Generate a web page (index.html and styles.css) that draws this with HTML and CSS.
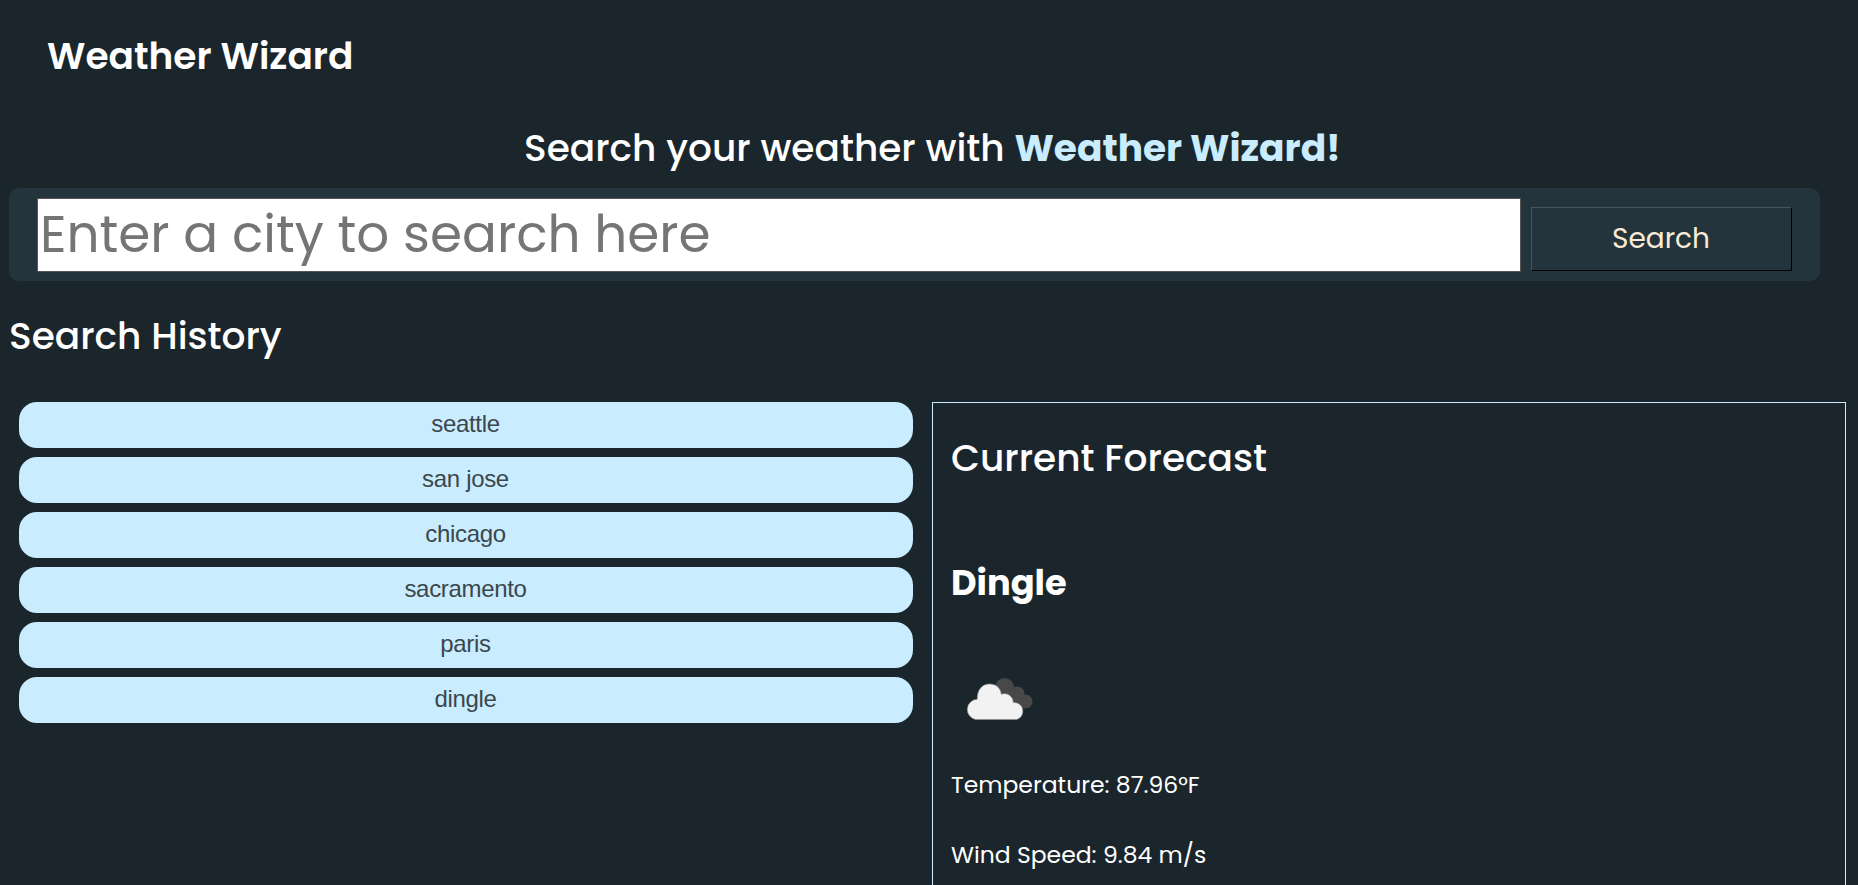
FILE: index.html
```html
<!DOCTYPE html>
<html lang="en"><head><meta charset="utf-8"><title>Weather Wizard</title><link rel="stylesheet" href="styles.css"></head>
<body>
<header class="site-header"><h1 class="brand">Weather Wizard</h1></header>
<main>
<h2 class="tagline">Search your weather with <strong class="tagline-name">Weather Wizard!</strong></h2>
<form class="search">
<input class="search-input" type="text" placeholder="Enter a city to search here">
<button class="search-button" type="button">Search</button>
</form>
<h2 class="history-title">Search History</h2>
<div class="columns">
<div class="history">
<button class="city">seattle</button>
<button class="city">san jose</button>
<button class="city">chicago</button>
<button class="city">sacramento</button>
<button class="city">paris</button>
<button class="city">dingle</button>
</div>
<section class="forecast">
<h2 class="forecast-title">Current Forecast</h2>
<h3 class="forecast-city">Dingle</h3>
<svg class="forecast-icon" viewBox="0 0 90 60" width="90" height="60"><g fill="#484849"><circle cx="49.500" cy="17.500" r="9.500"/><circle cx="62.500" cy="23.500" r="7"/><circle cx="70.500" cy="31.500" r="7"/><path d="M48 22L62 20L72 30L68 38L54 36Z"/></g><path fill="#f2f2f2" stroke="#8f9294" stroke-width=".6" d="M20.500 49.500A10.200 10.200 0 0 1 22.300 29.300C22 20 27 14 34.500 14C41 14 45.500 18 46.300 24.300C52 22 58 26 58.300 32.500C64 32.500 67.800 36 67.800 41C67.800 46 64.500 49.500 60 49.500Z"/></svg>
<p class="reading">Temperature: 87.96°F</p>
<p class="reading">Wind Speed: 9.84 m/s</p>
</section>
</div>
</main>
</body></html>
```
FILE: styles.css
```css
* { box-sizing: border-box; }
body {
  margin: 0;
  height: 885px;
  overflow: hidden;
  background: #1b262c;
  color: #fff;
  font-family: Poppins, Inter, sans-serif;
}
h1, h2, h3, p { margin: 0; }
.site-header { height: 112px; padding: 26px 47px; }
.brand { font-size: 37.5px; line-height: 60px; font-weight: 600; }
.tagline { height: 76px; padding-left: 524px; font-size: 37.5px; line-height: 72px; font-weight: 500; white-space: pre; }
.tagline-name { color: #c9ecff; font-weight: 700; }
.search { display: flex; gap: 10px; align-items: flex-start; width: 1811px; height: 93px; margin-left: 9px; padding: 10px 28px; border-radius: 10px; background: #24343c; }
.search-input { width: 1484px; height: 74px; padding: 0 2px 2px; border: 1px solid #555; border-radius: 0; background: #fff; font: 400 51.6px Poppins, Inter, sans-serif; }
.search-input::placeholder { color: #757575; }
.search-button { width: 261px; height: 64px; margin-top: 9px; padding: 0 1px 0 0; border: 1px solid; border-color: #4a5557 #000 #000 #4a5557; background: #24343c; color: #faebd7; font: 400 28px Poppins, Inter, sans-serif; }
.history-title { height: 121px; padding: 25px 9px; font-size: 37.5px; line-height: 60px; font-weight: 500; }
.columns { display: flex; gap: 19px; padding-left: 19px; }
.history { display: flex; flex-direction: column; gap: 9px; width: 894px; }
.city { height: 46px; padding: 0 1px 2px 0; border: 0; border-radius: 18px; background: #c9ecff; color: #3b474c; font: 24px "Liberation Sans", Arial, sans-serif; letter-spacing: -0.33px; }
.forecast { width: 914px; height: 483px; padding: 25px 18px 0; border: 1px solid #c9ecff; border-bottom: 0; }
.forecast-title { font-size: 37.5px; line-height: 60px; font-weight: 500; }
.forecast-city { margin-top: 65px; font-size: 35.2px; line-height: 60px; font-weight: 700; }
.forecast-icon { display: block; margin: 57px 0 35px 3.500px; }
.reading { font-size: 23.5px; line-height: 40px; }
.reading + .reading { margin-top: 30px; }
```
